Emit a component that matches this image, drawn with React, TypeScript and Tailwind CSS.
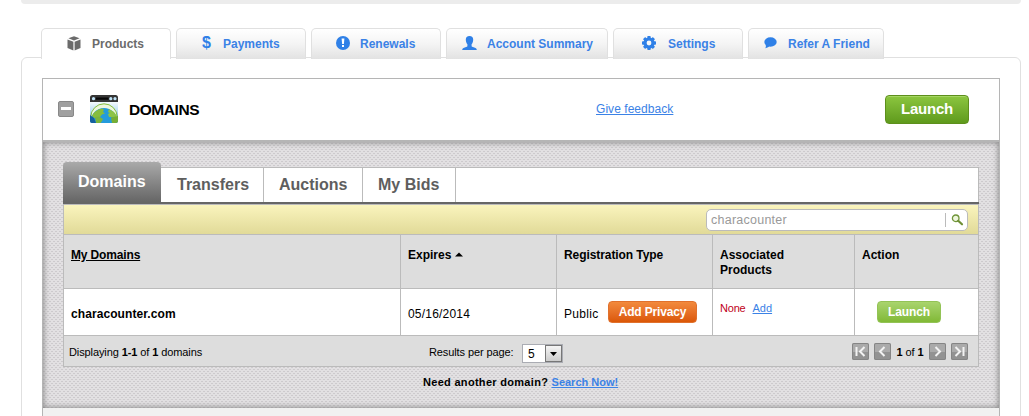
import React from 'react';

const BoxIcon = () => (
  <svg width="14" height="15" viewBox="0 0 14 15" fill="#6b6b6b">
    <path d="M7 0.3 12.6 2.3 7 4.6 1.4 2.3z" />
    <path d="M0.5 3.4 6.4 5.8V14.6L0.5 12z" />
    <path d="M13.5 3.4 7.6 5.8V14.6L13.5 12z" />
  </svg>
);

const RenewIcon = () => (
  <svg width="14" height="14" viewBox="0 0 14 14">
    <circle cx="7" cy="7" r="7" fill="#2f80e7" />
    <path d="M5.6 2.6h2.8l-.5 5.4H6.1z" fill="#fff" />
    <rect x="6" y="9" width="2" height="2" fill="#fff" />
  </svg>
);

const PersonIcon = () => (
  <svg width="15" height="14" viewBox="0 0 15 14" fill="#2f80e7">
    <path d="M7.5 0C10 0 11.2 1.4 11.2 3.4c0 2-.7 3.8-1.6 4.8v1.8c0 .8.8 1 2 1.3 2 .6 3.2 1 3.2 2.7H.2c0-1.7 1.2-2.1 3.2-2.7 1.2-.3 2-.5 2-1.3V8.2C4.5 7.2 3.8 5.4 3.8 3.4 3.8 1.4 5 0 7.5 0z" />
  </svg>
);

const GearIcon = () => (
  <svg width="14" height="14" viewBox="0 0 14 14">
    <g fill="#2f80e7">
      <rect x="5.3" y="0" width="3.4" height="14" rx="0.8" />
      <rect x="5.3" y="0" width="3.4" height="14" rx="0.8" transform="rotate(45 7 7)" />
      <rect x="5.3" y="0" width="3.4" height="14" rx="0.8" transform="rotate(90 7 7)" />
      <rect x="5.3" y="0" width="3.4" height="14" rx="0.8" transform="rotate(135 7 7)" />
      <circle cx="7" cy="7" r="5.5" />
    </g>
    <circle cx="7" cy="7" r="2.4" fill="#f8f8f8" />
  </svg>
);

const BubbleIcon = () => (
  <svg width="13" height="12" viewBox="0 0 13 12" fill="#2f80e7">
    <ellipse cx="6.5" cy="5" rx="6.2" ry="4.7" />
    <path d="M1.5 7.5C2.2 9.2 2 10 1.3 11.2 3.5 10.8 4.8 10.2 6 8.5z" />
  </svg>
);

const GlobeIcon = () => (
  <svg width="28" height="28" viewBox="0 0 28 28">
    <defs>
      <clipPath id="tile">
        <rect width="28" height="28" rx="2.5" />
      </clipPath>
      <linearGradient id="sky" x1="0" y1="0" x2="0" y2="1">
        <stop offset="0.2" stopColor="#fff" />
        <stop offset="0.6" stopColor="#b5dcf3" />
        <stop offset="1" stopColor="#2a6fa8" />
      </linearGradient>
    </defs>
    <g clipPath="url(#tile)">
      <rect width="28" height="28" fill="url(#sky)" />
      <circle cx="14" cy="22" r="13.2" fill="#eef7dc" stroke="#86bd3d" strokeWidth="1" />
      <circle cx="14" cy="26" r="13" fill="#249bdc" />
      <path d="M2 21C3.5 17 7 14.5 12 13.5l2 1-1 2.500 2 1.500-3 1-2 2.500-3 1H4z" fill="#86bd3d" />
      <path d="M5 22l4-.5 4 2.500-1 2-1.500 2H6z" fill="#7cb53b" />
      <path d="M0 20l4 3 2 5H0z" fill="#15609e" />
      <path d="M19 14l5 3 3 4-2 2-3-1-3 0-1-3 2-1-2-1z" fill="#8cc447" />
      <path d="M21 22.500l7-1.500v7h-6z" fill="#76ae35" />
      <rect width="28" height="7" fill="#353535" />
      <rect x="6" y="2.5" width="12.5" height="2.2" fill="#080808" />
      <circle cx="3.5" cy="3.7" r="1.6" fill="#bfe3f7" />
      <circle cx="20.8" cy="3.7" r="1.6" fill="#bfe3f7" />
      <circle cx="25" cy="3.7" r="1.6" fill="#bfe3f7" />
    </g>
  </svg>
);

const SearchIcon = () => (
  <svg width="13" height="12" viewBox="0 0 13 12" fill="none">
    <circle cx="4.7" cy="4.3" r="3.3" fill="#edf6dc" stroke="#6f9438" strokeWidth="1.3" />
    <path d="M7.2 6.8 11 10.3" stroke="#6f8f35" strokeWidth="2.2" strokeLinecap="round" />
  </svg>
);

const mainTabs = [
  { label: 'Payments', width: 'w-[130px]', pad: 'pl-[25px]', gap: 'w-[21px]', icon: <span className="text-[16px] leading-[14px] text-[#2f80e7]">$</span> },
  { label: 'Renewals', width: 'w-[130px]', pad: 'pl-[24px]', gap: 'w-[24px]', icon: <RenewIcon /> },
  { label: 'Account Summary', width: 'w-[162px]', pad: 'pl-[15px]', gap: 'w-[25px]', icon: <PersonIcon /> },
  { label: 'Settings', width: 'w-[130px]', pad: 'pl-[28px]', gap: 'w-[26px]', icon: <GearIcon /> },
  { label: 'Refer A Friend', width: 'w-[136px]', pad: 'pl-[15px]', gap: 'w-[24px]', icon: <BubbleIcon /> },
];

const pagerPaths = {
  first: 'M4.5 4v9M12.5 4 8 8.5l4.5 4.5',
  prev: 'M10.5 4 6 8.5l4.5 4.5',
  next: 'M6.5 4 11 8.5 6.5 13',
  last: 'M4.5 4 9 8.5 4.5 13M12.5 4v9',
};

const PagerButton = ({ path }: { path: string }) => (
  <button className="h-[17px] w-[17px] rounded-[2px] bg-linear-to-b from-[#aaa] from-50% to-[#929292] to-50% shadow-[inset_0_0_0_1px_#858585]">
    <svg width="17" height="17" viewBox="0 0 17 17" fill="none" stroke="#f2f2f2" strokeWidth="2">
      <path d={path} />
    </svg>
  </button>
);

const App = () => {
  return (
    <div className="h-[416px] w-[1029px] overflow-hidden bg-white pl-[21px] font-['Liberation_Sans',Arial,sans-serif] text-[12px] leading-[15px] text-black">
      <div className="h-[4px] w-[1000px] rounded-b-[5px] bg-[#ececec]" />

      {/* Account tabs */}
      <div className="relative mt-[24px] flex h-[31px] gap-[5px] pl-[20px] font-bold">
        <div className="flex w-[130px] items-center rounded-t-[5px] border border-b-0 border-[#e0e0e0] bg-white pl-[25px] text-[#6b6b6b]">
          <span className="-mt-[2px] flex w-[25px]"><BoxIcon /></span>
          <span>Products</span>
        </div>
        {mainTabs.map((tab) => (
          <div
            key={tab.label}
            className={`${tab.width} ${tab.pad} flex items-center rounded-t-[5px] border border-b-0 border-[#e0e0e0] bg-linear-to-b from-white via-[#f4f4f4] to-[#e2e2e2] text-[#3b82e6]`}
          >
            <span className={`${tab.gap} -mt-[2px] flex shrink-0`}>{tab.icon}</span>
            <span className="whitespace-nowrap">{tab.label}</span>
          </div>
        ))}
      </div>

      <div className="-mt-[2px] h-[400px] w-[1000px] rounded-t-[6px] border border-[#e0e0e0] px-[20px] pt-[20px]">
        <div className="h-[380px] w-[958px] border border-[#b5b5b5] bg-[#f1f1f1]">
          {/* Product header */}
          <div className="flex h-[61px] items-center bg-white pl-[15px] pr-[30px]">
            <button className="-mt-[2px] flex h-[16px] w-[16px] items-center justify-center rounded-[2px] border border-[#888] bg-[#a0a0a0]">
              <span className="h-[3px] w-[10px] bg-white" />
            </button>
            <span className="-mt-[2px] ml-[16px]"><GlobeIcon /></span>
            <h2 className="ml-[11px] w-[467px] text-[15.5px] font-bold tracking-[-0.45px]">DOMAINS</h2>
            <a href="#" className="text-[12px] tracking-[0.05px] text-[#3b82e6] underline">Give feedback</a>
            <button className="ml-auto h-[29px] w-[84px] rounded-[4px] border border-[#5d8f1c] bg-linear-to-b from-[#8cc63f] to-[#5f9a1c] pb-[2px] text-[15px] font-bold tracking-[-0.2px] text-white shadow-[inset_0_1px_0_#a5d563]">
              Launch
            </button>
          </div>

          {/* Domain manager */}
          <div className="h-[268px] border-t-2 border-[#b5b5b5] bg-[#e2e0e2] bg-[conic-gradient(from_90deg_at_2px_3px,#cdcacd_25%,transparent_0),conic-gradient(from_90deg_at_2px_3px,#cdcacd_25%,transparent_0)] bg-[size:4px_4px] bg-[position:0_0,2px_2px] px-[20px] pt-[20px] shadow-[inset_0_0_6px_#777]">
            <div className="flex h-[40px] w-[916px] items-end text-[16px] font-bold leading-[18px] text-[#5e5e5e]">
              <div className="h-[40px] w-[98px] rounded-t-[4px] bg-linear-to-b from-[#aaa] to-[#666] pl-[15px] pt-[11px] text-white">Domains</div>
              <div className="flex h-[35px] flex-1 border-r border-t border-[#bbb] bg-white">
                <div className="w-[103px] border-r border-[#bbb] pl-[16px] pt-[8px]">Transfers</div>
                <div className="w-[99px] border-r border-[#bbb] pl-[15px] pt-[8px]">Auctions</div>
                <div className="w-[93px] border-r border-[#bbb] pl-[15px] pt-[8px]">My Bids</div>
              </div>
            </div>

            <div className="h-[2px] w-[916px] bg-[#666]" />

            <div className="w-[916px] border border-[#bbb]">
              <div className="flex h-[29px] items-center justify-end bg-linear-to-b from-[#faf4bd] to-[#e1da98] pr-[10px]">
                <div className="flex h-[22px] w-[262px] items-center rounded-[5px] border border-[#bbb] bg-white pl-[4px] text-[12.5px] text-[#999]">
                  <span className="w-[234px] pt-px tracking-[0.25px]">characounter</span>
                  <span className="mr-[5px] h-[14px] w-px bg-[#bbb]" />
                  <SearchIcon />
                </div>
              </div>

              <div className="grid h-[55px] grid-cols-[337px_156px_156px_142px_123px] border-y border-[#bbb] bg-[#ddd] font-bold">
                <div className="border-r border-[#bbb] pl-[7px] pt-[13px] tracking-[-0.15px] underline">My Domains</div>
                <div className="flex border-r border-[#bbb] pl-[7px] pt-[13px]">
                  Expires
                  <svg className="ml-[4px] mt-[4px]" width="8" height="5" viewBox="0 0 8 5"><path d="M0 4.5 4 0.5 8 4.5z" /></svg>
                </div>
                <div className="border-r border-[#bbb] pl-[7px] pt-[13px] tracking-[-0.08px]">Registration Type</div>
                <div className="border-r border-[#bbb] pl-[7px] pt-[13px]">Associated<br />Products</div>
                <div className="pl-[7px] pt-[13px]">Action</div>
              </div>

              <div className="grid h-[47px] grid-cols-[337px_156px_156px_142px_123px] border-b border-[#bbb] bg-white">
                <div className="border-r border-[#bbb] pl-[7px] pt-[18px] font-bold tracking-[0.08px]">characounter.com</div>
                <div className="border-r border-[#bbb] pl-[7px] pt-[18px] tracking-[0.2px]">05/16/2014</div>
                <div className="flex border-r border-[#bbb] pl-[7px]">
                  <span className="w-[44px] pt-[18px] tracking-[0.3px]">Public</span>
                  <button className="mt-[12px] h-[22px] w-[89px] rounded-[4px] border border-[#e0712d] bg-linear-to-b from-[#f28a3c] to-[#db5705] font-bold tracking-[-0.15px] text-white">Add Privacy</button>
                </div>
                <div className="flex gap-[7px] border-r border-[#bbb] pl-[7px] pt-[12px] text-[11px]">
                  <span className="tracking-[-0.2px] text-[#c00020]">None</span>
                  <a href="#" className="text-[#3b82e6] underline">Add</a>
                </div>
                <div className="pl-[22px] pt-[12px]">
                  <button className="h-[22px] w-[64px] rounded-[4px] border border-[#93c356] bg-linear-to-b from-[#a9d46d] to-[#81b935] font-bold tracking-[-0.1px] text-white">Launch</button>
                </div>
              </div>

              <div className="flex h-[30px] items-center bg-[#ddd] pl-[5px] pr-[10px] text-[11px]">
                <span className="w-[360px] pt-[2px] tracking-[-0.1px]">Displaying <b>1-1</b> of <b>1</b> domains</span>
                <span className="w-[93px] pt-[2px] tracking-[-0.1px]">Results per page:</span>
                <div className="mt-[4px] flex h-[19px] w-[41px] border border-[#aaacb3] bg-white pl-[5px] text-[12px] leading-[18px]">
                  <span className="flex-1">5</span>
                  <span className="flex h-[17px] w-[17px] items-center justify-center border border-[#777] bg-linear-to-b from-[#f5f5f5] to-[#ccc] pt-[2px]">
                    <svg width="7" height="4" viewBox="0 0 7 4"><path d="M0 0h7L3.5 4z" /></svg>
                  </span>
                </div>
                <div className="ml-auto flex items-center gap-[5px]">
                  <PagerButton path={pagerPaths.first} />
                  <PagerButton path={pagerPaths.prev} />
                  <span className="w-[28px] whitespace-nowrap pt-[2px] text-center tracking-[-0.1px]"><b>1</b> of <b>1</b></span>
                  <PagerButton path={pagerPaths.next} />
                  <PagerButton path={pagerPaths.last} />
                </div>
              </div>
            </div>

            <div className="pl-[360px] pt-[8px] text-[11px] font-bold">
              <span className="tracking-[0.3px]">Need another domain? </span>
              <a href="#" className="text-[#3b82e6] underline">Search Now!</a>
            </div>
          </div>
        </div>
      </div>
    </div>
  );
};

export default App;
